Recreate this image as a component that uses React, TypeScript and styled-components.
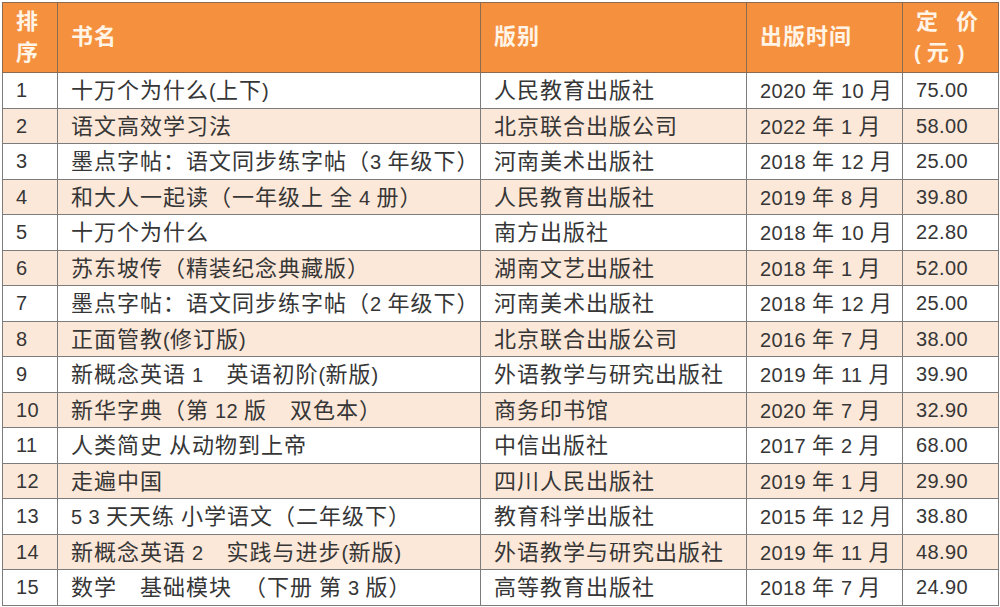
import React from "react";
import styled, { createGlobalStyle } from "styled-components";

const GlobalStyle = createGlobalStyle`
  html, body {
    margin: 0;
    padding: 0;
    background: #ffffff;
  }
  body {
    font-family: "Liberation Sans", "Noto Sans CJK SC", sans-serif;
  }
`;

const Page = styled.div`
  padding: 2px 2px 0 2px;
  width: 1000px;
  height: 607px;
  box-sizing: border-box;
  overflow: hidden;
`;

const Table = styled.table`
  width: 996px;
  border-collapse: collapse;
  table-layout: fixed;
  color: #363636;
  font-size: 20px;
`;

const HeadCell = styled.th`
  height: 69px;
  padding: 0 0 0 13px;
  background-color: #f5903f;
  color: #fff4e6;
  font-weight: 700;
  font-size: 20px;
  line-height: 31px;
  text-align: left;
  border: 1px solid #8a6a50;
  vertical-align: middle;
  white-space: nowrap;
`;

const Row = styled.tr<{ $shaded: boolean }>`
  background-color: ${p => (p.$shaded ? "#fce8d9" : "#ffffff")};
`;

const Cell = styled.td`
  padding: 0 0 0 13px;
  border: 1px solid #7c7c7c;
  white-space: nowrap;
  overflow: hidden;
  letter-spacing: 0.4px;
`;

const CellText = styled.div`
  height: 34.5px;
  display: flex;
  align-items: center;
  line-height: 24px;
  overflow: hidden;
  white-space: pre;
`;

// CJK glyphs in the picture run wider than the Latin digits beside them
const Han = styled.span<{ $spacing?: number }>`
  font-family: "Noto Sans CJK SC", sans-serif;
  font-size: 22px;
  line-height: 1;
  letter-spacing: ${p => p.$spacing ?? 1}px;
`;

const PriceLine = styled.span<{ $shift?: number }>`
  display: block;
  margin-left: ${p => p.$shift ?? 0}px;
`;

const Paren = styled.span<{ $gap: "left" | "right" }>`
  ${p => (p.$gap === "left" ? "margin-right: 6px;" : "margin-left: 9px;")}
`;

const HAN = /[\u3000-\u9fff\uff00-\uffef]/;

const splitHan = (text: string) => (
  <span>
    {text
      .split(/([\u3000-\u9fff\uff00-\uffef]+)/)
      .filter(Boolean)
      .map((part, i) => (HAN.test(part) ? <Han key={i}>{part}</Han> : part))}
  </span>
);

type Book = [string, string, string, string];

const books: Book[] = [
  ["十万个为什么(上下)", "人民教育出版社", "2020 年 10 月", "75.00"],
  ["语文高效学习法", "北京联合出版公司", "2022 年 1 月", "58.00"],
  ["墨点字帖：语文同步练字帖（3 年级下）", "河南美术出版社", "2018 年 12 月", "25.00"],
  ["和大人一起读（一年级上 全 4 册）", "人民教育出版社", "2019 年 8 月", "39.80"],
  ["十万个为什么", "南方出版社", "2018 年 10 月", "22.80"],
  ["苏东坡传（精装纪念典藏版）", "湖南文艺出版社", "2018 年 1 月", "52.00"],
  ["墨点字帖：语文同步练字帖（2 年级下）", "河南美术出版社", "2018 年 12 月", "25.00"],
  ["正面管教(修订版)", "北京联合出版公司", "2016 年 7 月", "38.00"],
  ["新概念英语 1　英语初阶(新版)", "外语教学与研究出版社", "2019 年 11 月", "39.90"],
  ["新华字典（第 12 版　双色本）", "商务印书馆", "2020 年 7 月", "32.90"],
  ["人类简史 从动物到上帝", "中信出版社", "2017 年 2 月", "68.00"],
  ["走遍中国", "四川人民出版社", "2019 年 1 月", "29.90"],
  ["5 3 天天练 小学语文（二年级下）", "教育科学出版社", "2015 年 12 月", "38.80"],
  ["新概念英语 2　实践与进步(新版)", "外语教学与研究出版社", "2019 年 11 月", "48.90"],
  ["数学　基础模块　（下册 第 3 版）", "高等教育出版社", "2018 年 7 月", "24.90"],
];

export default function App() {
  return (
    <Page>
      <GlobalStyle />
      <Table>
        <colgroup>
          <col style={{ width: 55 }} />
          <col style={{ width: 423 }} />
          <col style={{ width: 266 }} />
          <col style={{ width: 156 }} />
          <col style={{ width: 96 }} />
        </colgroup>
        <thead>
          <tr>
            <HeadCell>
              <Han>排</Han>
              <br />
              <Han>序</Han>
            </HeadCell>
            <HeadCell>
              <Han>书名</Han>
            </HeadCell>
            <HeadCell>
              <Han>版别</Han>
            </HeadCell>
            <HeadCell>
              <Han>出版时间</Han>
            </HeadCell>
            <HeadCell>
              <PriceLine>
                <Han $spacing={-2}>定　价</Han>
              </PriceLine>
              <PriceLine $shift={-2}>
                <Paren $gap="left">(</Paren>
                <Han $spacing={0}>元</Han>
                <Paren $gap="right">)</Paren>
              </PriceLine>
            </HeadCell>
          </tr>
        </thead>
        <tbody>
          {books.map((b, i) => (
            <Row key={i} $shaded={i % 2 === 1}>
              <Cell>
                <CellText>{i + 1}</CellText>
              </Cell>
              <Cell>
                <CellText>{splitHan(b[0])}</CellText>
              </Cell>
              <Cell>
                <CellText>{splitHan(b[1])}</CellText>
              </Cell>
              <Cell>
                <CellText>{splitHan(b[2])}</CellText>
              </Cell>
              <Cell>
                <CellText>{b[3]}</CellText>
              </Cell>
            </Row>
          ))}
        </tbody>
      </Table>
    </Page>
  );
}
